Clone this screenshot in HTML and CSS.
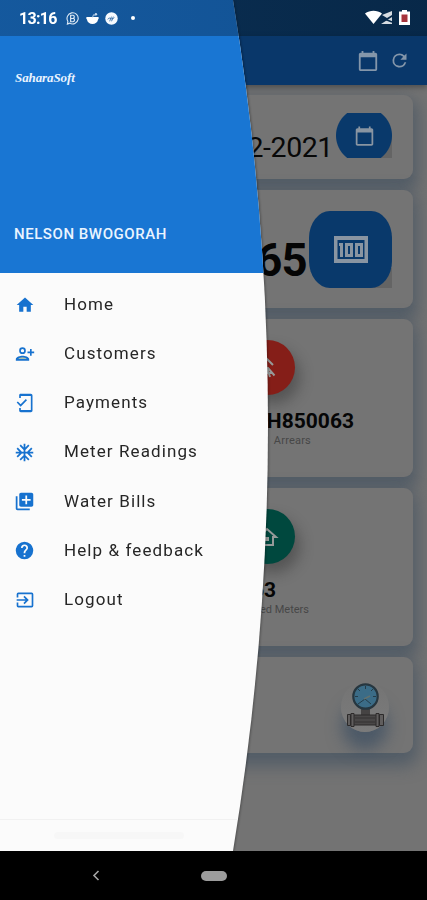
FILE: index.html
```html
<!DOCTYPE html>
<html lang="en">
<head>
<meta charset="utf-8">
<title>SaharaSoft</title>
<link rel="stylesheet" href="styles.css">
</head>
<body>
<div class="phone">
  <div class="screen">
    <header class="appbar">
      <svg class="bar-cal" viewBox="0 0 24 24"><path d="M20 3h-1V1h-2v2H7V1H5v2H4c-1.100 0-2 .9-2 2v16c0 1.100.9 2 2 2h16c1.100 0 2-.9 2-2V5c0-1.100-.9-2-2-2zm0 18H4V8h16v13z"/></svg>
      <svg class="bar-refresh" viewBox="0 0 24 24"><path d="M17.650 6.350A7.960 7.960 0 0 0 12 4a8 8 0 1 0 7.730 10h-2.080A6 6 0 1 1 12 6c1.660 0 3.140.69 4.220 1.780L13 11h7V4l-2.350 2.350z"/></svg>
    </header>
    <main class="cards">
      <section class="card card-date">
        <span class="date">2-2021</span>
        <div class="tile tile-date"><svg viewBox="0 0 24 24"><path d="M20 3h-1V1h-2v2H7V1H5v2H4c-1.100 0-2 .9-2 2v16c0 1.100.9 2 2 2h16c1.100 0 2-.9 2-2V5c0-1.100-.9-2-2-2zm0 18H4V8h16v13z"/></svg></div>
      </section>
      <section class="card card-total">
        <span class="total">65</span>
        <div class="tile tile-total"><svg viewBox="0 0 34 27"><path fill-rule="evenodd" d="M0 0h34v27H0zM3.500 4v19h27V4zM5 7h4v14H6V10H5zM11 7h8v14h-8zm3 3v8h2v-8zM21 7h8v14h-8zm3 3v8h2v-8z"/></svg></div>
      </section>
      <section class="card card-stat">
        <div class="disc red"><svg viewBox="0 0 24 24"><path d="M6 9l6-6 6 6M10 12h3l6.500 7.500M12 12l3 9M12 17h5"/></svg></div>
        <strong class="arrears">KSH850063</strong>
        <small class="arrears-label">Arrears</small>
      </section>
      <section class="card card-stat">
        <div class="disc green"><svg viewBox="0 0 24 24"><path d="M3 12 12 4l9 8h-3v8H6v-8z"/><path class="solid" d="M9 12h5v4H9z"/></svg></div>
        <strong class="meters">63</strong>
        <small class="meters-label">Installed Meters</small>
      </section>
      <section class="card card-gauge">
        <div class="gauge">
          <svg viewBox="0 0 40 50">
            <path fill="#454343" d="M15 27h9v8h-9z"/>
            <circle cx="19.500" cy="14.500" r="12.200" fill="#3b6c87" stroke="#26363f" stroke-width="2.200"/>
            <path stroke="#243b48" stroke-width="1" fill="none" d="M19.500 4v3M9 14.500h3M27 14.500h3M12 7l2 2M27 7l-2 2M12 22l7-5 6 5"/>
            <path stroke="#62716e" stroke-width="1.500" d="m18 17 6-3"/>
            <path fill="#494747" stroke="#2c2a2a" d="M4 33h30v10H4z"/>
            <path fill="#605e5e" stroke="#2c2a2a" d="M1.500 32.500h3v11h-3zM5 31.500h3v13H5zM30 31.500h3v13h-3zM33.500 32.500h4v11h-4z"/>
            <path stroke="#343232" d="M9 36h20M9 40h20"/>
          </svg>
        </div>
      </section>
    </main>
  </div>

  <div class="drawer-edge">
  <aside class="drawer">
    <div class="profile">
      <div class="logo">SaharaSoft</div>
      <div class="user">NELSON BWOGORAH</div>
    </div>
    <nav class="menu">
      <a class="item"><svg viewBox="0 0 24 24"><path d="M10 20v-6h4v6h5v-8h3L12 3 2 12h3v8z"/></svg><span>Home</span></a>
      <a class="item"><svg viewBox="0 0 24 24"><path fill-rule="evenodd" d="M9 4a4 4 0 1 1 0 8 4 4 0 0 1 0-8zm0 2a2 2 0 1 0 0 4 2 2 0 0 0 0-4z"/><path d="M20 6h-2v3h-3v2h3v3h2v-3h3V9h-3zM1 18v2h16v-2c0-2.660-5.330-4-8-4s-8 1.340-8 4z"/><path fill="#a9bdaf" d="M4 18c.4-1 3-2 5-2s4.600 1 5 2z"/></svg><span>Customers</span></a>
      <a class="item"><svg viewBox="0 0 24 24"><path d="M6 1h13c1.100 0 2 .9 2 2v18c0 1.100-.9 2-2 2H7c-1.100 0-2-.9-2-2v-3h2v2.500h12v-17H7V6H5V2zM2 11.500l1.400-1.400 3.400 3.400L13 7.300l1.400 1.400-7.600 7.700z"/></svg><span>Payments</span></a>
      <a class="item"><svg class="big" viewBox="0 0 24 24"><path d="M22 11h-4.170l3.240-3.240-1.410-1.420L15 11h-2V9l4.660-4.660-1.420-1.410L13 6.170V2h-2v4.170L7.760 2.930 6.340 4.340 11 9v2H9L4.340 6.340 2.930 7.760 6.170 11H2v2h4.170l-3.240 3.240 1.410 1.420L9 13h2v2l-4.660 4.660 1.420 1.410L11 17.830V22h2v-4.170l3.240 3.240 1.420-1.410L13 15v-2h2l4.660 4.660 1.410-1.420L17.830 13H22z"/></svg><span>Meter Readings</span></a>
      <a class="item"><svg class="big" viewBox="0 0 24 24"><path d="M4 6H2v14c0 1.100.9 2 2 2h14v-2H4V6zm16-4H8c-1.100 0-2 .9-2 2v12c0 1.100.9 2 2 2h12c1.100 0 2-.9 2-2V4c0-1.100-.9-2-2-2zm-1 9h-4v4h-2v-4H9V9h4V5h2v4h4v2z"/></svg><span>Water Bills</span></a>
      <a class="item"><svg class="big" viewBox="0 0 24 24"><path d="M12 2a10 10 0 1 0 0 20 10 10 0 0 0 0-20zm1 17h-2v-2h2v2zm2.070-7.750-.9.920C13.450 12.900 13 13.500 13 15h-2v-.5c0-1.100.45-2.100 1.170-2.830l1.240-1.260A2 2 0 1 0 10 9H8a4 4 0 1 1 8 0c0 .88-.36 1.680-.93 2.250z"/></svg><span>Help &amp; feedback</span></a>
      <a class="item"><svg viewBox="0 0 24 24"><path d="M10.090 15.590 11.500 17l5-5-5-5-1.410 1.410L12.670 11H2v2h10.670zM20 3H4a2 2 0 0 0-2 2v4h2V5h16v14H4v-4H2v4a2 2 0 0 0 2 2h16a2 2 0 0 0 2-2V5a2 2 0 0 0-2-2z"/></svg><span>Logout</span></a>
    </nav>
    <div class="drawer-foot"><i></i></div>
  </aside>
  </div>

  <div class="status">
    <span class="time">13:16</span>
    <svg class="st" viewBox="0 0 14 14"><path d="M1.500 13 2 10a6 6 0 1 1 2 2z" fill="none" stroke="#dce8f4" stroke-width="1.200"/><path d="M5 3.500v7h2.500a2 2 0 0 0 .5-3.800A1.700 1.700 0 0 0 7.500 3.500zM5 7h3" fill="none" stroke="#dce8f4" stroke-width="1.300"/></svg>
    <svg class="st" viewBox="0 0 14 14"><path d="M1 5.500h12c1 0 1 2 0 2.500-.5 3-3 5-6 5S1.500 11 1 8C0 7.500 0 5.500 1 5.500z" fill="#fff"/><path d="m7 6 1-3 2 .5" stroke="#c7d9ed" fill="none"/><circle cx="10.700" cy="2.500" r="1.300" fill="#c7d9ed"/></svg>
    <svg class="st" viewBox="0 0 14 14"><circle cx="7" cy="7" r="6.700" fill="#f6faff"/><path d="M3 8c2-4 4 2 7-2M5 10l2-5M7 10l2-5" fill="none" stroke="#155699" stroke-width=".8"/></svg>
    <i class="dot"></i>
    <svg class="signals" viewBox="0 0 46 16"><path fill="#fff" d="M0 3.500C5-.2 12-.2 17 3.500L8.500 14z"/><path fill="#d6dce2" d="M17 5l10-4v4l-5 3zM16 14l11-7v7z"/><path stroke="#06294b" stroke-width="1.500" d="m17 8 10 4"/><path fill="#fff" d="M34 1.500h3V0h5v1.500h3V15H34z"/><path fill="#a6343d" d="M36.500 4.500h6v7.500h-6z"/></svg>
  </div>
  <footer class="navbar">
    <svg viewBox="0 0 8 12"><path d="M6.500 1 2 5.500 6.500 10" fill="none" stroke="#a5a5a5" stroke-width="1.600"/></svg>
    <i class="pill"></i>
  </footer>
</div>
</body>
</html>
```
FILE: styles.css
```css
* { box-sizing: border-box; }
body { margin: 0; font-family: Roboto, sans-serif; background: #000; }
svg { display: block; flex: none; }
.phone { position: relative; width: 427px; height: 900px; overflow: hidden; }
.screen {
  height: 851px; padding-top: 36px; overflow: hidden;
  background: linear-gradient(#093158 36px, #737373 36px);
}
.appbar {
  height: 49px; background: #09376a; display: flex; align-items: center;
  justify-content: flex-end; gap: 10px; padding-right: 17px;
  position: relative; z-index: 1; box-shadow: 0 2px 6px rgba(0,0,0,.35);
}
.appbar svg { fill: #8496aa; }
.bar-cal { width: 22px; height: 22px; }
.bar-refresh { width: 21px; height: 21px; }
.cards { display: flex; flex-direction: column; gap: 11px; padding: 10px 14px 0; }
.card {
  background: #747474; border-radius: 9px; position: relative;
  box-shadow: 0 8px 16px 5px rgba(68,82,98,.68);
}
.card-date { height: 84px; display: flex; justify-content: flex-end; padding: 18px 21px 0 0; }
.date { font-size: 28.500px; line-height: 34px; margin-top: 18px; margin-right: 3px; letter-spacing: -.4px; color: #080808; }
.tile { display: flex; align-items: center; justify-content: center; position: relative; }
.tile svg { fill: #8995a2; }
.tile::after { content: ""; position: absolute; right: 0; bottom: 0; width: 20px; height: 20px; background: #646464; z-index: -1; }
.card-date, .card-total { z-index: 0; }
.tile-date { width: 56px; height: 45px; background: radial-gradient(circle at center, #09396b 27.500px, transparent 28.500px); }
.tile-date svg { width: 21px; height: 22px; }
.card-total { height: 118px; display: flex; justify-content: flex-end; padding: 21px 21px 0 0; }
.total { font-size: 45.500px; line-height: 54px; margin-top: 23px; margin-right: 2px; letter-spacing: -.7px; font-weight: 700; color: #050505; }
.tile-total { width: 83px; height: 77px; background: #09396b; border-radius: 21px / 27px; }
.tile-total svg { width: 34px; height: 27px; }
.card-stat { height: 158px; display: flex; flex-direction: column; align-items: center; padding-top: 21px; }
.disc { width: 55px; height: 55px; border-radius: 50%; margin-left: 107px; display: flex; align-items: center; justify-content: center; box-shadow: 5px 9px 14px rgba(35,35,35,.38); }
.disc svg { width: 24px; height: 24px; fill: none; stroke: #969a99; stroke-width: 2; }
.disc .solid { fill: #969a99; stroke: none; }
.red { background: #851e18; }
.green { background: #00483e; }
strong { font-size: 21px; line-height: 25px; color: #060606; white-space: nowrap; }
small { font-size: 11px; line-height: 14px; color: #474747; white-space: nowrap; }
.arrears { margin-top: 14px; align-self: flex-end; margin-right: 59px; }
.arrears-label { align-self: flex-end; margin-right: 102px; letter-spacing: .2px; }
.meters { margin-top: 14px; align-self: flex-end; margin-right: 137px; }
.meters-label { align-self: flex-end; margin-right: 104px; }
.card-gauge { height: 96px; display: flex; justify-content: flex-end; padding: 25px 24px 0 0; }
.gauge { width: 48px; height: 50px; border-radius: 50%; background: linear-gradient(#747474, #7b7b7b); box-shadow: 0 19px 16px -1px rgba(50,72,95,.6); }
.gauge svg { width: 40px; height: 50px; margin-left: 5px; }

.drawer-edge { position: absolute; left: 0; top: 0; z-index: 2; filter: drop-shadow(1px 0 1px rgba(0,0,0,.3)); }
.drawer {
  width: 303px; height: 851px; background: #fbfbfb;
  clip-path: path("M0 0H233Q303 425.500 233 851H0Z");
  display: flex; flex-direction: column;
}
.profile { height: 273px; background: #1976d3; padding: 68px 0 0 15px; color: #eaf4ff; }
.logo { font: italic 700 13px/20px "Liberation Serif", serif; letter-spacing: -.1px; height: 20px; }
.user { font-size: 15px; line-height: 18px; font-weight: 500; margin-top: 137px; margin-left: -1px; letter-spacing: .55px; white-space: nowrap; }
.menu { display: flex; flex-direction: column; padding-top: 6px; }
.item { display: flex; align-items: center; height: 49.250px; padding-left: 15px; color: #262626; }
.item svg { width: 20px; height: 20px; fill: #1772cf; margin-top: 2px; }
.item span { margin-left: 29px; font-size: 17px; line-height: 22px; letter-spacing: 1.100px; white-space: nowrap; }
.item .big { width: 21px; height: 21px; margin: 2px 0 0 -1px; }
.drawer-foot { margin-top: auto; height: 32px; border-top: 1px solid #f1f1f1; padding: 12px 0 0 54px; }
.drawer-foot i { display: block; width: 130px; height: 7px; border-radius: 4px; background: #f7f7f7; }

.status {
  position: absolute; left: 0; top: 0; z-index: 3; width: 427px; height: 36px; padding: 0 16px 0 19px;
  background: linear-gradient(90deg, rgba(14,46,78,.4), rgba(6,28,52,.4)); display: flex; align-items: center; color: #fff;
}
.time { font-size: 16px; font-weight: 700; width: 47px; letter-spacing: -.7px; }
.st { width: 13px; height: 13px; margin-right: 6.500px; }
.dot { width: 4px; height: 4px; border-radius: 50%; background: #fff; margin-left: 6px; }
.signals { width: 46px; height: 16px; margin-left: auto; }
.navbar { height: 49px; background: #000; display: flex; align-items: center; padding-left: 92px; }
.navbar svg { width: 8px; height: 12px; }
.pill { width: 26px; height: 10px; border-radius: 5px; background: #9c9c9c; margin-left: 101px; }
```
